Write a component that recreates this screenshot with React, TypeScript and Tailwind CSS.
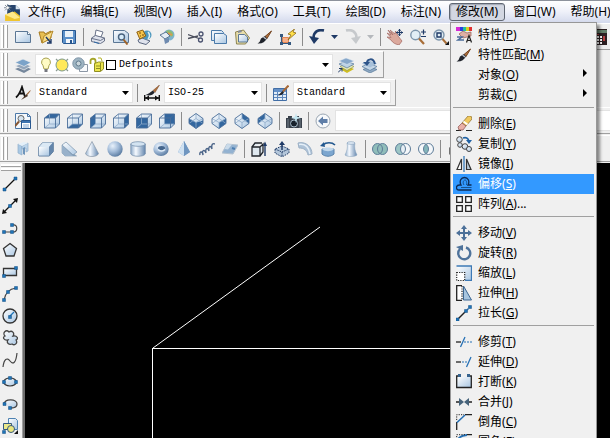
import { useState, type ReactNode } from "react";

const NAVY = "#1f3a66";
const BLUE = "#2f6ba8";
const STEEL = "#5b7795";

function Ico({ children }: { children: ReactNode }) {
  return (
    <svg viewBox="0 0 16 16" className="h-4 w-4 shrink-0" fill="none" aria-hidden="true">
      {children}
    </svg>
  );
}

// Gradients shared by all icons
function IconDefs() {
  return (
    <svg className="absolute h-0 w-0" aria-hidden="true">
      <defs>
        <linearGradient id="paper" x1="0" y1="0" x2="1" y2="1">
          <stop offset="0" stopColor="#ffffff" />
          <stop offset="1" stopColor="#a9c6e2" />
        </linearGradient>
        <linearGradient id="solid" x1="0" y1="0" x2="1" y2="0">
          <stop offset="0" stopColor="#8fabc9" />
          <stop offset="0.35" stopColor="#f6faff" />
          <stop offset="1" stopColor="#6386ae" />
        </linearGradient>
        <radialGradient id="ball" cx="0.35" cy="0.3" r="0.75">
          <stop offset="0" stopColor="#e8f1fb" />
          <stop offset="0.5" stopColor="#a3bcd9" />
          <stop offset="1" stopColor="#58799f" />
        </radialGradient>
      </defs>
    </svg>
  );
}

const newFile = <Ico><path d="M.5 2.500h12l3 3v8H.5z" fill="url(#paper)" stroke={STEEL} /><path d="M12.500 2.500v3h3" fill="#fff" stroke={STEEL} /></Ico>;
const openFile = <Ico><path d="M1 3h5l1 2 6-3v7l-9 5z" fill="#e8bf52" stroke="#a77b20" /><path d="M4 14l2-7 9-5-3 8z" fill="#f7dc8a" stroke="#b58b2c" /><path d="M8 8l5 6m0-4v4H9" stroke={NAVY} strokeWidth="1.400" /></Ico>;
const save = <Ico><path d="M1.500 1.500h13v13h-12l-1-1z" fill="#5b90c9" stroke="#28578f" /><path d="M4 2h8v6H4z" fill="#e9f1f8" /><path d="M5 10h7v4H5z" fill="#f3f6fa" /><path d="M9 11h2v3H9z" fill="#28578f" /></Ico>;
const print = <Ico><path d="M5 7l1-6 7 2-2 5z" fill="#fff" stroke="#6a7389" /><path d="M1.500 9l4-2.500 9 2.500v3l-4 2.500-9-2z" fill="#dfe3ed" stroke="#6a7389" /><path d="M2 9.500l8.500 2 4-2.500" stroke="#6a7389" /><path d="M4 13l5 1.500" stroke={BLUE} /></Ico>;
const preview = <Ico><path d="M.5 1.500h11l4 3v9H.5z" fill="url(#paper)" stroke={STEEL} /><circle cx="8.500" cy="8" r="3" fill="#d7ecfa" stroke="#49637f" strokeWidth="1.400" /><path d="M10.500 10.500l4 5" stroke="#a0642a" strokeWidth="2" /></Ico>;
const publish = <Ico><path d="M2 11l4-2 8 3-4 3.500-7-2z" fill="#dfe3ed" stroke="#5a6780" /><circle cx="11" cy="6" r="4.500" fill="#4c97bd" /><path d="M12 3c2 2 2 5 0 7" stroke="#dff1f4" strokeWidth="1.500" /><path d="M.8 3l6-2 3 6-6 3z" fill="#f5c54a" stroke="#8d5f12" /><path d="M3 4h2m1 2h2M4 7h1" stroke="#7a4e0c" strokeWidth="1.200" /></Ico>;
const web = <Ico><circle cx="10" cy="6" r="5.500" fill="#7eb3ce" /><path d="M7 2c4-2 8 1 7 5-2 1-5 0-6-2z" fill="#8fbb74" /><path d="M9 4l4 2" stroke="#e2964c" strokeWidth="1.500" /><path d="M1 6l6-3 4 4-5 3z" fill="#e5edf5" stroke={STEEL} /><path d="M5 10l5-1v4l-4 2z" fill="#6f8bb0" /></Ico>;
const cut = <Ico><path d="M0 5.500l11 4M0 9.500l10-2.500" stroke="#4b4f5d" strokeWidth="1.300" /><circle cx="13" cy="5" r="2" stroke="#4b5370" strokeWidth="1.300" /><circle cx="12.500" cy="11" r="2" stroke="#4b5370" strokeWidth="1.300" /></Ico>;
const copyClip = <Ico><path d="M.5 1.500h10l2 2v8H.5z" fill="url(#paper)" stroke="#4a7aaa" /><path d="M3.500 4.500h9l3 2v8h-12z" fill="url(#paper)" stroke="#4a7aaa" /></Ico>;
const paste = <Ico><path d="M1.500 3l8-2 6 8-4 6h-9z" fill="#e8deab" stroke="#8d8450" /><path d="M4.500 5.500h6l3 2.500v5h-9z" fill="url(#paper)" stroke={STEEL} /><path d="M4 2l3-1 1 2-4 1z" fill="#828a98" /></Ico>;
const brush = <Ico><path d="M14.500 2L8 7.500l2 2z" fill="#b0713d" stroke="#74431f" /><path d="M8 7L4 9.500c-1 2-1 4-3.500 5C5 15 8 13 10 9.500z" fill="#20242c" /><path d="M6.500 8l2.500 2" stroke="#b9c0c9" strokeWidth="1.500" /></Ico>;
const blockEdit = <Ico><path d="M2.500 8.500h6v5h-6z" fill="#f7b08a" stroke="#e08555" /><path d="M1.500 6.500v8h8" stroke="#35587f" strokeWidth="1.200" /><path d="M0 5h3v3H0zM0 13h3v3H0zM8 13h3v3H8z" fill="#35587f" /><path d="M14.500 0L8 5l3 1-3 5 8-7-3-1z" fill="#ffe04a" stroke="#8b6814" strokeWidth=".8" /></Ico>;
const undo = <Ico><path d="M15 1.500C9 0 4.500 3 4.500 9" stroke={NAVY} strokeWidth="2.600" /><path d="M0 7l5 8 5-6z" fill={NAVY} /></Ico>;
const redo = <Ico><path d="M1 1.500C7 0 11.500 3 11.500 9" stroke="#c6c9cc" strokeWidth="2.600" /><path d="M16 7l-5 8-5-6z" fill="#c6c9cc" /></Ico>;
const caret = (color: string) => <svg viewBox="0 0 7 4" className="h-1 w-[7px]" aria-hidden="true"><path d="M0 0h7L3.500 4z" fill={color} /></svg>;
const pan = <Ico><path d="M1 1l5 5-3-5 5 4 .5-3L11 7l4 5-3 4c-4-1-6-2-8-5L0 8l4 .5L0 4l4 2z" fill="#dba99d" stroke="#a87069" strokeWidth=".8" /><path d="M12.500 0v7M9 3.500h7" stroke={NAVY} strokeWidth="1.200" /><path d="M12.500 0L11 2h3zM12.500 7L11 5h3zM16 3.500L14 2v3zM9 3.500L11 2v3z" fill={NAVY} /></Ico>;
const zoomRt = <Ico><circle cx="5.500" cy="6" r="4.700" fill="#e2eef5" stroke="#7d95ab" strokeWidth="1.400" /><path d="M9 9.500l5 5.500" stroke="#a86e38" strokeWidth="2.200" /><path d="M11 3h5M13.500 .5V5.500M11 7.500h5" stroke={NAVY} strokeWidth="1.200" /></Ico>;
const zoomWin = <Ico><circle cx="6" cy="6" r="5" fill="#e2eef5" stroke="#7d95ab" strokeWidth="1.400" /><path d="M4 4h4v4H4z" stroke={NAVY} strokeWidth="1.400" /><path d="M9.500 10l4 4.500" stroke="#a86e38" strokeWidth="2" /><path d="M16 12v4h-4z" fill="#111" /></Ico>;
const calc = <Ico><path d="M1 0h15v16H1z" fill="#2c2022" /><path d="M2 1h14v3H2z" fill="#64806a" /><path d="M3 7h2v2H3zm3 0h2v2H6zm3 0h2v2H9zM3 10h2v2H3zm3 0h2v2H6zm3 0h2v2H9zM3 13h2v2H3zm3 0h2v2H6zm3 0h2v2H9z" fill="#fff" /><path d="M3 5h2v1H3zm3 0h2v1H6zm6 2h2v5h-2z" fill="#b34141" /></Ico>;

const layers = <Ico><path d="M0 12l8-3 8 3-7 4z" fill="#75879c" /><path d="M0 9l8-3 8 3-7 4z" fill="#93a6bb" stroke="#f0f0f0" strokeWidth=".7" /><path d="M0 5.500L8 2l8 3.500L9 9.500z" fill="#7ba3c9" stroke="#f0f0f0" strokeWidth=".7" /></Ico>;
const layerCurrent = <Ico><path d="M2 12l7-3 7 3-7 4z" fill="#cfbe22" /><path d="M2 9.500l7-3 7 3-7 4z" fill="#e6eab6" stroke="#8b8e46" strokeWidth=".6" /><path d="M1 7l7-3 8 3-7 4z" fill="#bcd2e5" stroke="#55779a" strokeWidth=".7" /><path d="M1 4l7-3 8 3-7 3.500z" fill="#86a7ca" stroke="#e4ecf4" strokeWidth=".5" /><path d="M0 15.500l4-4m0 3v-3H1" stroke={NAVY} /></Ico>;
const layerPrev = <Ico><path d="M2 12.500l7-3 7 3-7 3.500z" fill="#8fa9c3" stroke="#55779a" strokeWidth=".7" /><path d="M1 9.500l7-3 8 3-7 4z" fill="#c4d6e6" stroke="#55779a" strokeWidth=".7" /><path d="M1 6.500l7-3 8 3-7 4z" fill="#a7c0d9" /><path d="M6 6c0-4 6-6 8 1" stroke="#2e5488" strokeWidth="2" /><path d="M2 5h7L6 9z" fill="#2e5488" /></Ico>;
const textStyle = <Ico><path d="M1 12.500C4 10 6 5 7 2l3 10M3.500 8.500h6" stroke="#111" strokeWidth="1.800" /><path d="M15.500 5l-4 4 1 1 3-4z" fill="#9b6031" /><path d="M11.500 9L6 15l7-4z" fill="#4d3728" /></Ico>;
const dimStyle = <Ico><path d="M15.500 0L9 5.500l2 2z" fill="#b0713d" stroke="#74431f" strokeWidth=".5" /><path d="M9 5.500C6 7 5 9 1.500 10 6 11 9 10 10.500 7.500z" fill="#20242c" /><path d="M.7 10v6M15.300 10v6M1 13h14" stroke="#111" strokeWidth="1.400" /><path d="M1 13l4-2.500v5zM15 13l-4-2.500v5z" fill="#111" /></Ico>;
const tableStyle = <Ico><path d="M.5 3.500h13v12H.5z" fill="#e3edf7" stroke="#426ea6" /><path d="M1 4h12v3H1z" fill="#6591c8" /><path d="M1 9.500h12M1 12.500h12M4.500 7v8M9.500 7v8" stroke="#5f88bc" /><path d="M9.500 6C8 7 7 9 5 10.500c3 0 5-1 6-3z" fill="#20242c" /><path d="M15.500.5L10 6.500" stroke="#a86835" strokeWidth="2" /></Ico>;

const bulb = <Ico><path d="M8 1a4.300 4.300 0 0 0-3 7.500l1 3.500h4l1-3.500A4.300 4.300 0 0 0 8 1z" fill="#fffbc4" stroke="#a7a14e" /><path d="M6.500 12h3v3h-3z" fill="#75777f" /></Ico>;
const sun = <Ico><path d="M2 2l12 12M14 2L2 14" stroke="#8a9a90" strokeWidth="1.200" /><circle cx="8" cy="8" r="6" fill="#ffe95a" stroke="#7d9a8e" /></Ico>;
const vpFreeze = <Ico><path d="M7.500 7.500h8v7h-8z" fill="#f8fafc" stroke="#8b97a5" /><circle cx="6.500" cy="6.500" r="5.700" fill="#9db4c2" stroke="#7e94a7" /><circle cx="6.500" cy="6.500" r="2.500" fill="#c9d6dc" stroke="#607a8e" /></Ico>;
const unlock = <Ico><path d="M1.500 7V4c0-3 5-3 5 0v3" stroke="#a5a52a" strokeWidth="1.800" /><path d="M5.500 6.500l4-1.500h5v7l-3 2.500h-6z" fill="#ece64e" stroke="#8f8e22" /><path d="M7 9h4M7 11.500h4M11.500 6v8" stroke="#8f8e22" /><path d="M9 1h3l1 3" stroke="#b5b32f" /></Ico>;

const CUBE_FACES = {
  top: "M.5 5l5-4h10l-4 4z",
  bottom: "M.5 15l5-4h10l-4 4z",
  left: "M.5 5l5-4v10l-5 4z",
  right: "M11.500 5l4-4v10l-4 4z",
  front: "M.5 5h11v10H.5z",
  back: "M5.500 1h10v10h-10z",
};

function Cube({ face }: { face: keyof typeof CUBE_FACES }) {
  return (
    <Ico>
      <path d="M.5 5l5-4h10v10l-4 4H.5z" fill="url(#paper)" />
      <path d={CUBE_FACES[face]} fill="#33679f" />
      <path d="M5.500 1v10h10M.5 15l5-4" stroke="#8fabc9" strokeWidth=".8" />
      <path d="M.5 5l5-4h10v10l-4 4H.5zM.5 5h11v10M11.500 5l4-4" stroke="#4a6d98" strokeWidth=".9" />
    </Ico>
  );
}

function IsoCube({ fill }: { fill: string }) {
  return (
    <Ico>
      <path d="M8 .5l7 5v5l-7 5-7-5v-5z" fill="url(#paper)" />
      <path d={fill} fill="#33679f" />
      <path d="M1 5.500l7 4 7-4M8 9.500v6M8 .5v5M1 10.500l7-5 7 5" stroke="#8fabc9" strokeWidth=".8" />
      <path d="M8 .5l7 5v5l-7 5-7-5v-5z" stroke="#4a6d98" strokeWidth=".9" />
    </Ico>
  );
}

const namedViews = <Ico><path d="M.5.500h12l3 3v12H.5z" fill="#f4f8fc" stroke="#4c78a8" /><path d="M12.500.5v3h3" stroke="#4c78a8" /><circle cx="6" cy="5.500" r="3" fill="#d6e4ef" stroke="#666" /><path d="M4 8.500L0 13" stroke="#875632" strokeWidth="2" /><path d="M6.500 7.500h9v8h-9z" fill="#fff" stroke="#28578f" /><path d="M7 8h8v2H7z" fill="#3c73b0" /><path d="M8 12h6M8 14h6" stroke="#7fa5d0" /></Ico>;
const camera = <Ico><path d="M0 5h2V3h4v2h3V3h4v2h3v10H0z" fill="#39414b" /><path d="M2 6v9M14 6v9" stroke="#76818c" /><circle cx="8" cy="10.500" r="3.500" fill="#18222c" stroke="#a9bccb" /><path d="M10 0l1 3.500L15 5l-4 1-1 4-1-4-4-1 4-1.500z" fill="#c5e8f2" /></Ico>;
const back = <Ico><circle cx="8" cy="8" r="7" fill="#f7f9fb" stroke="#9aa6b2" /><path d="M3 8l5-4.500V6h4.500v4H8v2.500z" fill="#5f7ea8" /></Ico>;

const polysolid = <Ico><path d="M3 3l4 2v9l-4-2z" fill="#a9c8e4" stroke="#8eacc9" strokeWidth=".7" /><path d="M7 5l6-3v8l-2 1V7L7 8z" fill="#bcd5eb" stroke="#8eacc9" strokeWidth=".7" /><path d="M3 3l6-2 4 1-6 3z" fill="#e4f0f9" /><path d="M8 7l2-1v8l-2-1z" fill="#6f95bb" /></Ico>;
const box = <Ico><path d="M.8 6l4-4.500h10.500v9l-4 4.500H.8z" fill="#8fabc9" stroke="#5f7d9d" /><path d="M1 6h10v8.500H1z" fill="url(#paper)" /><path d="M1 6l4-4.500h10L11 6z" fill="#dbe9f5" /><path d="M11 6l4-4.500v9L11 15z" fill="#6486ab" /></Ico>;
const wedge = <Ico><path d="M1 4v8l3 3h11.500z" fill="#7e9bb9" stroke="#8ea3b8" strokeWidth=".7" /><path d="M1 4l4-3 11 10-4 3z" fill="url(#paper)" stroke="#7892aa" strokeWidth=".7" /><path d="M1 4l11 11H4l-3-3z" fill="#98b1ca" /></Ico>;
const cone = <Ico><path d="M8 .5l6.500 12c-1 4-12 4-13 0z" fill="url(#solid)" stroke="#8797a8" strokeWidth=".7" /></Ico>;
const sphere = <Ico><circle cx="8" cy="8" r="7.700" fill="url(#ball)" /></Ico>;
const cylinder = <Ico><path d="M.8 3v10c2 3 12.500 3 14.500 0V3z" fill="url(#solid)" stroke="#6f8aa7" strokeWidth=".7" /><ellipse cx="8" cy="3" rx="7.200" ry="2.300" fill="#d3e3f1" stroke="#6f8aa7" strokeWidth=".7" /></Ico>;
const torus = <Ico><ellipse cx="8" cy="8" rx="7.700" ry="7" fill="url(#ball)" /><ellipse cx="8.500" cy="7" rx="3.500" ry="2" fill="#45668d" /><path d="M5 8.500c2 2 5 2 7 0" stroke="#e1edf8" strokeWidth="1.500" /></Ico>;
const pyramid = <Ico><path d="M8 0l6 11-6 4-6-4z" fill="#7ba0c7" /><path d="M8 0v15l-6-4z" fill="#cfe1f1" /><path d="M8 0l6 11-6 4z" fill="#6f96c0" /></Ico>;
const helix = <Ico><path d="M1 14c-1-4 3-4 3 0-2-5 2-6 3-2-1-5 2-6 3-2-1-5 2-6 3-2-1-5 1-6 3-5" stroke="#4b6488" strokeWidth="1.400" /></Ico>;
const planar = <Ico><path d="M5 3l11 1-5 9-11-1z" fill="#93b2d1" stroke="#b4c2d0" /><path d="M5 3l5 .5-4 5-3.500-.5z" fill="#cadbea" /><path d="M10 7l3 1" stroke="#4c7eb0" strokeWidth="2" /></Ico>;
const extrude = <Ico><path d="M1 6h8v9H1zM1 6l3-4h7M9 6l3-3v8l-3 4" fill="#dfe8ef" stroke="#22262c" strokeWidth="1.300" /><path d="M14 15V3" stroke={NAVY} strokeWidth="1.400" /><path d="M12 5l2-4.500L16 5z" fill={NAVY} /></Ico>;
const presspull = <Ico><path d="M8 5l7 3v4l-7 4-7-4V8z" fill="#b3c6da" stroke={NAVY} strokeDasharray="1.500 1" /><path d="M1 8l7 3 7-3M8 11v4" stroke={NAVY} strokeDasharray="1.500 1" /><path d="M8 9V3" stroke={NAVY} strokeWidth="1.500" /><path d="M5 4l3-4 3 4z" fill={NAVY} /></Ico>;
const sweep = <Ico><path d="M1 2c8-2 14 4 14 11l-4 1C10 9 7 7 2 7z" fill="#adc2d7" stroke="#9db1c6" /><path d="M2 3.500c7-1 10 4 11 9.500" stroke="#e5eff8" strokeWidth="1.500" /></Ico>;
const revolve = <Ico><path d="M2 8h12v5c-3 3-9 3-12 0z" fill="#7ca6cf" stroke="#5a83ab" /><path d="M2 8c3-2 9-2 12 0-3 3-9 3-12 0z" fill="#c1d8ec" /><path d="M3 4c3-3 9-3 12 0" stroke="#23588f" strokeWidth="1.600" /><path d="M0 5l4-4 1 5z" fill="#23588f" /></Ico>;
const loft = <Ico><path d="M4 2h8c-1 4 0 8 2 12-2 2-10 2-12 0 2-4 3-8 2-12z" fill="url(#solid)" stroke="#8ba4bd" strokeWidth=".5" /><ellipse cx="8" cy="2" rx="4" ry="1.300" fill="#e3eef8" stroke="#7f9bb7" strokeWidth=".6" /></Ico>;
const partial = <Ico><path d="M3 13V7l4-5h8v13H7l-2-2z" fill="#cfd8e0" stroke="#222" strokeWidth="1.200" /></Ico>;

function Bool({ a, b, mid }: { a: string; b: string; mid: string }) {
  return (
    <Ico>
      <ellipse cx="5.500" cy="8" rx="5" ry="5.500" fill={a} />
      <ellipse cx="10.500" cy="8" rx="5" ry="5.500" fill={b} />
      <path d="M8 3.500c3.300 2 3.300 7 0 9-3.300-2-3.300-7 0-9z" fill={mid} />
      <ellipse cx="5.500" cy="8" rx="5" ry="5.500" stroke="#5d7c98" />
      <ellipse cx="10.500" cy="8" rx="5" ry="5.500" stroke="#5d7c98" />
    </Ico>
  );
}

type Tool = { label: string; icon: ReactNode; slim?: boolean };

// A null entry is a divider
const STANDARD_TOOLS: (Tool | null)[] = [
  { label: "新建", icon: newFile },
  { label: "打开", icon: openFile },
  { label: "保存", icon: save },
  null,
  { label: "打印", icon: print },
  { label: "打印预览", icon: preview },
  { label: "发布", icon: publish },
  { label: "三维 DWF", icon: web },
  null,
  { label: "剪切", icon: cut },
  { label: "复制", icon: copyClip },
  { label: "粘贴", icon: paste },
  { label: "特性匹配", icon: brush },
  { label: "块编辑器", icon: blockEdit },
  null,
  { label: "放弃", icon: undo },
  { label: "放弃列表", icon: caret(NAVY), slim: true },
  { label: "重做", icon: redo },
  { label: "重做列表", icon: caret("#b5b8bc"), slim: true },
  null,
  { label: "实时平移", icon: pan },
  { label: "实时缩放", icon: zoomRt },
  { label: "窗口缩放", icon: zoomWin },
];

const VIEW_TOOLS: (Tool | null)[] = [
  { label: "命名视图", icon: namedViews },
  null,
  { label: "俯视", icon: <Cube face="top" /> },
  { label: "仰视", icon: <Cube face="bottom" /> },
  { label: "左视", icon: <Cube face="left" /> },
  { label: "右视", icon: <Cube face="right" /> },
  { label: "主视", icon: <Cube face="front" /> },
  { label: "后视", icon: <Cube face="back" /> },
  null,
  { label: "西南等轴测", icon: <IsoCube fill="M1 5.500l7 4 7-2v3l-7 5-7-5z" /> },
  { label: "东南等轴测", icon: <IsoCube fill="M15 5.500l-7 4v6l7-5z" /> },
  { label: "东北等轴测", icon: <IsoCube fill="M8 .5l7 5v5l-7-5z" /> },
  { label: "西北等轴测", icon: <IsoCube fill="M8 .5l-7 5v5l7-5z" /> },
  null,
  { label: "创建相机", icon: camera },
  null,
  { label: "上一个视图", icon: back },
];

const MODELING_TOOLS: (Tool | null)[] = [
  { label: "多段体", icon: polysolid },
  { label: "长方体", icon: box },
  { label: "楔体", icon: wedge },
  { label: "圆锥体", icon: cone },
  { label: "球体", icon: sphere },
  { label: "圆柱体", icon: cylinder },
  { label: "圆环体", icon: torus },
  { label: "棱锥面", icon: pyramid },
  { label: "螺旋", icon: helix },
  { label: "平面曲面", icon: planar },
  null,
  { label: "拉伸", icon: extrude },
  { label: "按住并拖动", icon: presspull },
  { label: "扫掠", icon: sweep },
  { label: "旋转", icon: revolve },
  { label: "放样", icon: loft },
  null,
  { label: "并集", icon: <Bool a="#8fbdba" b="#8fbdba" mid="#8fbdba" /> },
  { label: "差集", icon: <Bool a="#9cc6c6" b="#f4f7fa" mid="#e6eff5" /> },
  { label: "交集", icon: <Bool a="#f4f7fa" b="#f4f7fa" mid="#84b6bb" /> },
  null,
  { label: "三维移动", icon: partial },
];

const node = (x: number, y: number) => <path d={`M${x - 1.5} ${y - 1.5}h3v3h-3z`} fill="#1e74b8" stroke="#174f80" strokeWidth=".5" />;

const DRAW_TOOLS: Tool[] = [
  { label: "直线", icon: <Ico><path d="M2 14L13 3" stroke="#111" strokeWidth="1.200" />{node(2.5, 13.5)}{node(13.5, 2.5)}</Ico> },
  { label: "构造线", icon: <Ico><path d="M2 14L14 2" stroke="#111" strokeWidth="1.300" /><path d="M0 16l1-5 4 4zM16 0l-1 5-4-4z" fill="#111" />{node(8, 8)}</Ico> },
  { label: "多段线", icon: <Ico><path d="M2 12h9c5 0 5-8 0-7" stroke="#444" strokeWidth="1.200" />{node(2, 12)}{node(10, 12)}{node(10, 5)}</Ico> },
  { label: "正多边形", icon: <Ico><path d="M8 1.500l6.500 5-2.500 7.500H4L1.500 6.500z" fill="url(#paper)" stroke="#333" strokeWidth="1.300" /></Ico> },
  { label: "矩形", icon: <Ico><path d="M1.500 4.500h13v7h-13z" fill="url(#paper)" stroke="#333" strokeWidth="1.300" />{node(2, 12)}{node(14, 4)}</Ico> },
  { label: "圆弧", icon: <Ico><path d="M2 14C3 8 7 3 14 2" stroke="#444" strokeWidth="1.200" />{node(2, 14)}{node(6, 6)}{node(14, 2)}</Ico> },
  { label: "圆", icon: <Ico><circle cx="8" cy="8" r="7" fill="url(#paper)" stroke="#333" strokeWidth="1.300" /><path d="M8 8l4-4" stroke="#1e74b8" strokeWidth="1.300" />{node(8, 9)}</Ico> },
  { label: "修订云线", icon: <Ico><path d="M3 6C0 3 4-1 7 2c3-2 6 1 4 4 4-1 6 3 3 4 2 3-1 6-4 4-3 1-6-1-4-4-4 1-6-3-3-4z" fill="url(#paper)" stroke="#444" strokeWidth="1.300" /></Ico> },
  { label: "样条曲线", icon: <Ico><path d="M1 15c1-8 4-10 7-6s6 2 7-8" stroke="#444" strokeWidth="1.200" /></Ico> },
  { label: "椭圆", icon: <Ico><ellipse cx="8" cy="8" rx="6.500" ry="4" fill="url(#paper)" stroke="#333" strokeWidth="1.200" />{node(8, 4)}{node(2, 8)}{node(14, 8)}</Ico> },
  { label: "椭圆弧", icon: <Ico><path d="M2 8c1-6 13-5 13 0 0 3-3 4-6 4" fill="url(#paper)" stroke="#444" strokeWidth="1.300" />{node(2.5, 8)}{node(8, 12)}</Ico> },
  { label: "插入块", icon: <Ico><path d="M6.500.5h7l2 2v9h-9z" fill="url(#paper)" stroke="#4e82b2" /><path d="M1.500 5.500h8v6h-8z" fill="#ece989" stroke="#35587f" /><circle cx="9" cy="11" r="3.500" fill="#e9e67d" stroke="#35587f" />{node(2, 14)}<path d="M16 12v4h-4z" fill="#111" /></Ico> },
];

type MenuItem = { text: string; key: string; icon?: ReactNode; submenu?: boolean; dots?: boolean };

const MODIFY_MENU: MenuItem[][] = [
  [
    { text: "特性", key: "P", icon: <Ico><path d="M0 0h4v4H0z" fill="#d42bd4" /><path d="M4 0h3v4H4z" fill="#2b3fe0" /><path d="M7 0h3v4H7z" fill="#22c0a0" /><path d="M10 0h3v4h-3z" fill="#d8d022" /><path d="M13 0h3v4h-3z" fill="#e03030" /><path d="M3 7l4-3 4 2 4-1v4l-4 1-4 1z" fill="#dfb0a5" stroke="#8f5a52" strokeWidth=".7" /><path d="M1 10h5l-4 3h6" stroke="#4c6d9b" strokeWidth="1.500" /><path d="M10.500 15.500l2.500-7 2.500 7m-4-2h3" stroke="#222" strokeWidth="1.200" /></Ico> },
    { text: "特性匹配", key: "M", icon: brush },
    { text: "对象", key: "O", submenu: true },
    { text: "剪裁", key: "C", submenu: true },
  ],
  [
    { text: "删除", key: "E", icon: <Ico><path d="M0 14.500h5M10 14.500h6" stroke="#222" /><path d="M12 0h3l1 3-6 7-4-3z" fill="#f0c95e" stroke="#8a6a2a" strokeWidth=".7" /><path d="M6 7l4 3-3 4H3l-1-3z" fill="#e9b0a6" stroke="#8a5250" strokeWidth=".7" /><path d="M7.500 5.500l4 3" stroke="#fff" strokeWidth="1.600" /></Ico> },
    { text: "复制", key: "Y", icon: <Ico><circle cx="3.500" cy="3.500" r="2.800" fill="url(#paper)" stroke="#444" /><circle cx="4" cy="9" r="2.300" fill="url(#paper)" stroke="#444" /><circle cx="9" cy="10.500" r="2.800" fill="url(#paper)" stroke="#444" /><circle cx="13" cy="13" r="2.500" fill="url(#paper)" stroke="#444" /><path d="M7 2c3-1 5 0 6 3" stroke="#1f62a5" strokeWidth="1.500" /><path d="M10 4h6l-3 4z" fill="#1f62a5" /></Ico> },
    { text: "镜像", key: "I", icon: <Ico><path d="M5.500 3v10.500H1z" fill="#fff" stroke="#333" strokeWidth="1.200" /><path d="M10.500 3v10.500H15z" fill="#b9cad9" stroke="#333" strokeWidth="1.200" /><path d="M8 0v16" stroke="#2570b5" strokeWidth="1.200" /></Ico> },
    { text: "偏移", key: "S", icon: <Ico><path d="M15.500 14H3c-3.500 0-3.500-5 .5-5H5C3 5 5 1.500 8.500 1.500S14 5 12 9h3.500" stroke="#0d2b55" strokeWidth="1.300" /><path d="M15.500 11.500H5m3-2.500c-2-3 0-5 1-5s2 1 1.500 5" stroke="#17528f" /></Ico> },
    { text: "阵列", key: "A", dots: true, icon: <Ico><path d="M.7.7h5.600v5.600H.7zM9.700.7h5.600v5.600H9.700zM.7 9.700h5.600v5.600H.7zM9.700 9.700h5.600v5.600H9.700z" fill="#fff" stroke="#222" strokeWidth="1.300" /></Ico> },
  ],
  [
    { text: "移动", key: "V", icon: <Ico><path d="M8 0l3 4H9v3h3V5l4 3-4 3V9H9v3h2l-3 4-3-4h2V9H4v2L0 8l4-3v2h3V4H5z" fill="#4c7099" /></Ico> },
    { text: "旋转", key: "R", icon: <Ico><path d="M10 2.500A6 6 0 1 1 4 4" stroke="#4f739b" strokeWidth="2.400" /><path d="M0 2l7-2v6z" fill="#4f739b" /></Ico> },
    { text: "缩放", key: "L", icon: <Ico><path d="M.5 1h15v14.500h-7" fill="url(#paper)" stroke="#3d79b5" strokeWidth="1.300" /><path d="M.7 7.500h8v8h-8z" fill="#fff" stroke="#222" strokeWidth="1.200" strokeDasharray="1.200 1.200" /></Ico> },
    { text: "拉伸", key: "H", icon: <Ico><path d="M6 .7H.7v14.600H6" fill="#fff" stroke="#222" strokeWidth="1.300" /><path d="M7.500 1l8 14H7.500z" fill="#a7c5df" stroke="#3b6591" /><path d="M6 1v14" stroke="#222" strokeWidth="1.200" strokeDasharray="1.200 1.200" /></Ico> },
    { text: "拉长", key: "G", icon: <Ico><path d="M1 15L9 7" stroke="#222" strokeWidth="1.400" /><path d="M9 7l6-6" stroke="#3d79b5" strokeWidth="1.500" strokeDasharray="2 1" />{node(1.5, 14.5)}{node(10, 6)}{node(14, 2)}</Ico> },
  ],
  [
    { text: "修剪", key: "T", icon: <Ico><path d="M0 8h5" stroke="#222" strokeWidth="1.300" /><path d="M4.500 13L9 3" stroke="#2570b5" strokeWidth="1.300" /><path d="M8 8h8" stroke="#2570b5" strokeDasharray="2 1" /></Ico> },
    { text: "延伸", key: "D", icon: <Ico><path d="M0 8h5" stroke="#222" strokeWidth="1.300" /><path d="M10.500 13L15 3" stroke="#2570b5" strokeWidth="1.300" /><path d="M6 8h6" stroke="#2570b5" strokeDasharray="2 1" /></Ico> },
    { text: "打断", key: "K", icon: <Ico><path d="M1 3h14v10H1z" fill="url(#paper)" /><path d="M2 2H.7v11.500h14.600V2H14" stroke="#222" strokeWidth="1.300" /><path d="M2 0h3v3H2zM11 0h3v3h-3z" fill="#36648f" /></Ico> },
    { text: "合并", key: "J", icon: <Ico><path d="M0 8h4M12 8h4" stroke="#222" strokeWidth="1.500" /><path d="M3 4l5 4-5 4zM13 4L8 8l5 4z" fill="#46637b" /></Ico> },
    { text: "倒角", key: "C", icon: <Ico><path d="M.7 8v8M9 .7h7" stroke="#222" strokeWidth="1.300" /><path d="M1 8.500L9 1" stroke="#2570b5" strokeWidth="1.600" /><path d="M.7 6V.7H8" stroke="#222" strokeDasharray="1.200 1.200" /></Ico> },
    { text: "圆角", key: "F", icon: <Ico><path d="M.7 9v7M10 .7h6" stroke="#222" strokeWidth="1.300" /><path d="M1 10c0-6 3-8 10-9" stroke="#2570b5" strokeWidth="1.800" /><path d="M.7 8V.7H9" stroke="#222" strokeDasharray="1.200 1.200" /></Ico> },
  ],
];

const MENUS = [
  { text: "文件", key: "F" },
  { text: "编辑", key: "E" },
  { text: "视图", key: "V" },
  { text: "插入", key: "I" },
  { text: "格式", key: "O" },
  { text: "工具", key: "T" },
  { text: "绘图", key: "D" },
  { text: "标注", key: "N" },
  { text: "修改", key: "M" },
  { text: "窗口", key: "W" },
  { text: "帮助", key: "H" },
];

function Grip() {
  return (
    <div className="flex shrink-0 gap-px self-stretch py-px pl-px">
      <div className="w-[3px] border-r border-[#a0a0a0] bg-white" />
      <div className="w-[3px] border-r border-[#a0a0a0] bg-white" />
    </div>
  );
}

function Divider() {
  return (
    <div className="flex w-[6px] shrink-0 justify-center">
      <div className="h-[18px] w-px bg-[#8c8c8c]" />
    </div>
  );
}

function ToolButton({ tool }: { tool: Tool }) {
  return (
    <button
      type="button"
      aria-label={tool.label}
      className={`flex h-[22px] shrink-0 items-center justify-center hover:bg-[#dbe7f4] ${tool.slim ? "w-[13px]" : "w-[23px]"}`}
    >
      {tool.icon}
    </button>
  );
}

function Tools({ items }: { items: (Tool | null)[] }) {
  return items.map((t, i) => (t ? <ToolButton key={t.label} tool={t} /> : <Divider key={i} />));
}

function Toolbar({ children, fit }: { children: ReactNode; fit?: boolean }) {
  return (
    <div className={`flex h-7 pb-px ${fit ? "w-fit" : "w-full"}`}>
      <div
        className={`flex min-w-0 items-center gap-[3px] border-t border-b border-t-white border-b-[#a0a0a0] ${
          fit ? "border-r border-r-[#a0a0a0]" : "flex-1"
        }`}
      >
        <Grip />
        <div className="flex min-w-0 flex-1 items-center">{children}</div>
      </div>
    </div>
  );
}

function Combo({ label, value, wide, children }: { label: string; value: string; wide?: boolean; children?: ReactNode }) {
  return (
    <div className={`relative mx-px flex h-[21px] items-center bg-white ${wide ? "w-[298px]" : "w-[98px]"}`}>
      <div className="pointer-events-none absolute left-[3px] flex items-center">{children}</div>
      <select
        aria-label={label}
        defaultValue={value}
        className={`h-full w-full appearance-none border border-[#e3e3e3] bg-transparent font-['Liberation_Mono',monospace] text-[10px] text-black ${
          wide ? "pl-[83px]" : "pl-[3px]"
        }`}
      >
        <option>{value}</option>
      </select>
      <div className="pointer-events-none absolute right-1">{caret("#000")}</div>
    </div>
  );
}

function ModifyMenu() {
  const [active, setActive] = useState("偏移");

  return (
    <div
      role="menu"
      className="absolute top-full left-px z-10 mt-px w-[147px] border border-[#979797] bg-[#f0f0f0] px-[2px] py-[2px] shadow-[3px_3px_3px_rgba(0,0,0,0.45)]"
    >
      {MODIFY_MENU.map((group, i) => (
        <div key={i} className={i > 0 ? "mt-[2px] border-t border-[#a0a0a0] pt-[6px]" : ""}>
          {group.map((item) => (
            <button
              key={item.text}
              type="button"
              role="menuitem"
              onMouseEnter={() => setActive(item.text)}
              className={`flex h-5 w-full items-center gap-[6px] pr-[7px] pl-[3px] text-left ${
                active === item.text ? "bg-[#3399ff] text-white" : "text-black"
              }`}
            >
              <span className="h-4 w-4 shrink-0">{item.icon}</span>
              <span className="flex-1 whitespace-nowrap">
                {item.text}(<u>{item.key}</u>){item.dots && "..."}
              </span>
              {item.submenu && (
                <svg viewBox="0 0 4 8" className="mb-1 h-2 w-1" aria-hidden="true">
                  <path d="M0 0l4 4-4 4z" fill="#000" />
                </svg>
              )}
            </button>
          ))}
        </div>
      ))}
    </div>
  );
}

export default function App() {
  const [open, setOpen] = useState("修改");

  return (
    <div className="flex h-screen flex-col overflow-hidden bg-[#f0f0f0] font-['Noto_Sans','Noto_Sans_CJK_SC',sans-serif] text-[12px] leading-4 text-black">
      <IconDefs />

      <nav className="flex h-[23px] shrink-0 items-center border-t border-[#8d929c] bg-linear-to-b from-white via-[#eef0f9] to-[#d3d9ec] pl-1">
        <svg viewBox="0 0 16 16" className="h-[17px] w-[17px] shrink-0" aria-hidden="true">
          <path d="M3 1h8l4 4v8H3z" fill="#26436d" />
          <path d="M11 1v4h4z" fill="#dbe6f1" />
          <path d="M1 10l9-3 5 4v5H1z" fill="#f0c52f" />
          <path d="M1 10l7-3 7 6-5 1z" fill="#ffe98a" />
          <path d="M3.500 0v7M0 3.500h7M1 1l5 5M6 1L1 6" stroke="#7c8794" strokeWidth=".9" />
          <path d="M3.500 2v3M2 3.500h3" stroke="#fff" />
        </svg>
        <div className="flex gap-px">
          {MENUS.map((m) => (
            <div key={m.key} className="relative">
              <button
                type="button"
                onClick={() => setOpen(open === m.text ? "" : m.text)}
                className={`flex h-[18px] items-center rounded-[3px] border px-[6px] whitespace-nowrap ${
                  open === m.text ? "border-[#5f6672] bg-[#d3d7e2] shadow-[inset_1px_1px_1px_#a4a9b6]" : "border-transparent"
                }`}
              >
                {m.text}({m.key})
              </button>
              {m.text === "修改" && open === "修改" && <ModifyMenu />}
            </div>
          ))}
        </div>
      </nav>

      <header className="shrink-0">
        <Toolbar>
          <Tools items={STANDARD_TOOLS} />
          <div className="flex flex-1 justify-end overflow-hidden pl-[145px]">
            <ToolButton tool={{ label: "快速计算器", icon: calc }} />
          </div>
        </Toolbar>

        <Toolbar fit>
          <ToolButton tool={{ label: "图层特性管理器", icon: layers }} />
          <Combo label="图层" value="Defpoints" wide>
            {bulb}
            {sun}
            <span className="flex gap-px pl-[2px]">
              {vpFreeze}
              {unlock}
              <span className="mt-[3px] h-[10px] w-[10px] border border-black bg-white" />
            </span>
          </Combo>
          <ToolButton tool={{ label: "置为当前图层", icon: layerCurrent }} />
          <ToolButton tool={{ label: "上一个图层", icon: layerPrev }} />
          <span className="w-[3px]" />
        </Toolbar>

        <Toolbar fit>
          <ToolButton tool={{ label: "文字样式", icon: textStyle }} />
          <Combo label="文字样式控制" value="Standard" />
          <Divider />
          <ToolButton tool={{ label: "标注样式", icon: dimStyle }} />
          <Combo label="标注样式控制" value="ISO-25" />
          <Divider />
          <ToolButton tool={{ label: "表格样式", icon: tableStyle }} />
          <Combo label="表格样式控制" value="Standard" />
          <span className="w-[3px]" />
        </Toolbar>

        <Toolbar>
          <Tools items={VIEW_TOOLS} />
          <input type="text" aria-label="视图" className="ml-px h-[21px] min-w-0 flex-1 border border-r-0 border-[#e3e3e3] bg-white px-1" />
        </Toolbar>

        <Toolbar>
          <Tools items={MODELING_TOOLS} />
        </Toolbar>
      </header>

      <main className="flex min-h-0 flex-1">
        <aside className="flex w-[23px] shrink-0 flex-col border-r border-[#a0a0a0]">
          <div className="flex flex-col gap-px px-px pt-px pb-[2px]">
            <div className="h-[3px] border-b border-[#a0a0a0] bg-white" />
            <div className="h-[3px] border-b border-[#a0a0a0] bg-white" />
          </div>
          {DRAW_TOOLS.map((t) => (
            <button
              key={t.label}
              type="button"
              aria-label={t.label}
              className="flex h-[22px] w-5 shrink-0 items-center justify-center hover:bg-[#dbe7f4]"
            >
              {t.icon}
            </button>
          ))}
        </aside>

        <section aria-label="绘图区" className="min-w-0 flex-1 overflow-hidden border-l-2 border-[#6d6d6d] bg-black">
          <svg viewBox="0 0 585 275" className="h-[275px] w-[585px]" fill="none" stroke="#fff" aria-hidden="true">
            <path d="M128 185L295 64" />
            <path d="M127.500 275V185.500H430" shapeRendering="crispEdges" />
          </svg>
        </section>
      </main>
    </div>
  );
}
